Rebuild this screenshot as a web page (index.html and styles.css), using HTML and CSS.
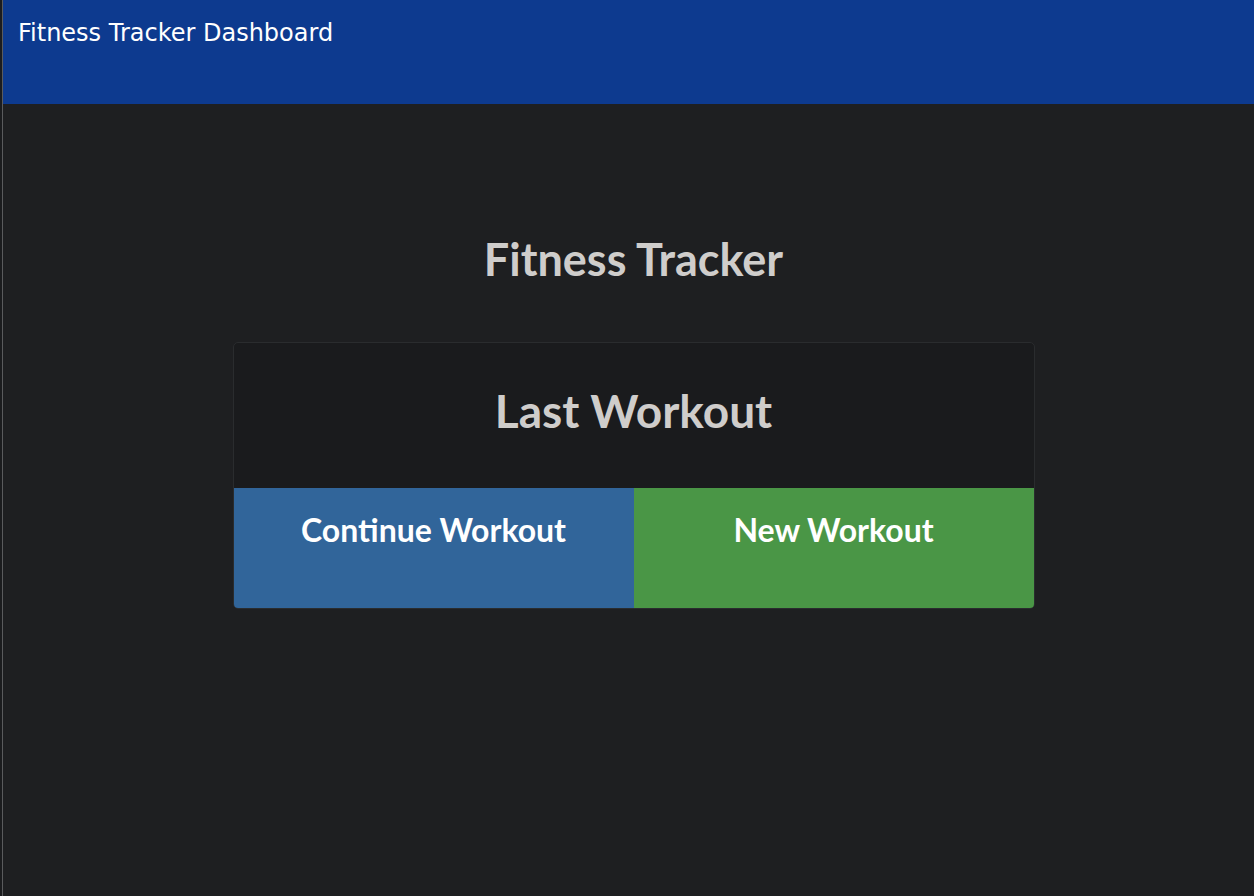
FILE: index.html
```html
<!DOCTYPE html>
<html lang="en">
<head>
<meta charset="utf-8">
<title>Fitness Tracker Dashboard</title>
<link rel="stylesheet" href="styles.css">
</head>
<body>
<div class="frame">
  <header class="topbar">
    <span class="topbar-title">Fitness Tracker Dashboard</span>
  </header>
  <main class="content">
    <h1 class="page-title">Fitness Tracker</h1>
    <section class="card">
      <div class="card-head">
        <h2 class="card-title">Last Workout</h2>
      </div>
      <div class="card-actions">
        <button class="action action-continue">Continue Workout</button>
        <button class="action action-new">New Workout</button>
      </div>
    </section>
  </main>
</div>
</body>
</html>
```

FILE: styles.css
```css
html, body {
  margin: 0;
  padding: 0;
  height: 100%;
  background: #1e1f21;
}
body {
  padding-left: 2px;
  box-sizing: border-box;
  background: #1b1c1e;
}
.frame {
  min-height: 100%;
  border-left: 1px solid #5a5b5d;
  background: #1e1f21;
  display: flex;
  flex-direction: column;
}
.topbar {
  background: #0d3a8f;
  height: 104px;
  padding: 19px 15px 0;
  box-sizing: border-box;
}
.topbar-title {
  font-family: "DejaVu Sans", sans-serif;
  font-size: 24px;
  color: #ffffff;
}
.content {
  display: flex;
  flex-direction: column;
  align-items: center;
  padding-left: 10px;
  font-family: Lato, "Open Sans", sans-serif;
}
.page-title {
  margin: 127px 0 0;
  font-size: 45px;
  font-weight: 700;
  line-height: 56px;
  color: #cfcdcb;
}
.card {
  margin-top: 55px;
  width: 802px;
  border: 1px solid #2a2c2e;
  border-radius: 5px;
  overflow: hidden;
  box-sizing: border-box;
  background: #1a1b1d;
}
.card-head {
  height: 145px;
  display: flex;
  justify-content: center;
  padding-top: 40px;
  box-sizing: border-box;
}
.card-title {
  margin: 0;
  font-size: 46px;
  font-weight: 700;
  line-height: 56px;
  color: #cfcdcb;
}
.card-actions {
  display: grid;
  grid-template-columns: 1fr 1fr;
  height: 120px;
}
.action {
  border: 0;
  margin: 0;
  font-family: Lato, "Open Sans", sans-serif;
  font-size: 32px;
  font-weight: 700;
  color: #ffffff;
  display: flex;
  justify-content: center;
  align-items: flex-start;
  padding-top: 22px;
  line-height: 40px;
}
.action-continue { background: #31659a; }
.action-new { background: #4a9646; }
```
